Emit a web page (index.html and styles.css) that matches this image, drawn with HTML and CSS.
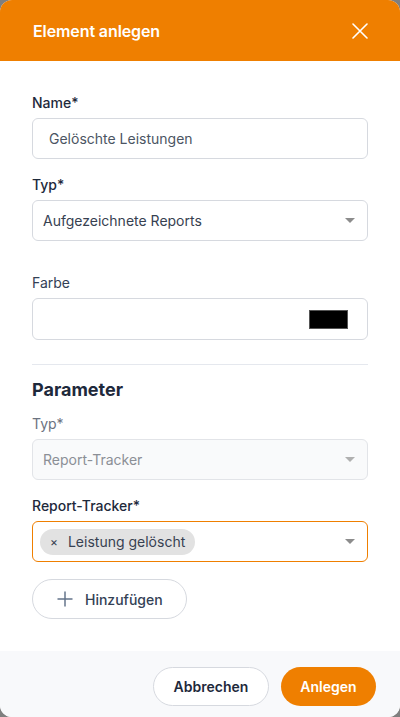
FILE: index.html
```html
<!DOCTYPE html>
<html lang="de">
<head>
<meta charset="utf-8">
<title>Element anlegen</title>
<link rel="stylesheet" href="styles.css">
</head>
<body>
<div class="modal">
  <header class="modal-header">
    <h1 class="modal-title">Element anlegen</h1>
    <button class="close-btn" aria-label="Schließen">
      <svg width="16" height="16" viewBox="0 0 16 16"><path d="M1 1L15 15M15 1L1 15" stroke="#fff" stroke-width="1.6" fill="none" stroke-linecap="round"/></svg>
    </button>
  </header>
  <main class="modal-body">
    <div class="field">
      <label class="label">Name*</label>
      <div class="input"><span class="input-text">Gelöschte Leistungen</span></div>
    </div>
    <div class="field">
      <label class="label">Typ*</label>
      <div class="input select"><span class="select-text">Aufgezeichnete Reports</span><span class="caret"></span></div>
    </div>
    <div class="field field-farbe">
      <label class="label label-light">Farbe</label>
      <div class="input color"><span class="swatch"></span></div>
    </div>
    <hr class="sep">
    <h2 class="section-title">Parameter</h2>
    <div class="field">
      <label class="label label-muted">Typ*</label>
      <div class="input select disabled"><span class="select-text">Report-Tracker</span><span class="caret"></span></div>
    </div>
    <div class="field">
      <label class="label">Report-Tracker*</label>
      <div class="input select focused"><span class="chip"><span class="chip-x">×</span>Leistung gelöscht</span><span class="caret"></span></div>
    </div>
    <button class="add-btn">
      <svg width="16" height="16" viewBox="0 0 16 16"><path d="M8 0.5V15.5M0.5 8H15.5" stroke="#64748b" stroke-width="1.5" fill="none"/></svg>
      <span>Hinzufügen</span>
    </button>
  </main>
  <footer class="modal-footer">
    <button class="btn btn-outline">Abbrechen</button>
    <button class="btn btn-primary">Anlegen</button>
  </footer>
</div>
</body>
</html>
```
FILE: styles.css
```css
* { box-sizing: border-box; }
html, body { margin: 0; padding: 0; }
body {
  background: #7f7f7f;
  font-family: Inter, "Noto Sans", "Liberation Sans", sans-serif;
  width: 400px;
  height: 717px;
  overflow: hidden;
}
.modal {
  width: 400px;
  height: 717px;
  background: #fff;
  border-radius: 12px;
  overflow: hidden;
  display: flex;
  flex-direction: column;
}
.modal-header {
  height: 61px;
  background: #ef7f00;
  display: flex;
  align-items: center;
  justify-content: space-between;
  padding: 0 32px 0 33px;
  flex-shrink: 0;
}
.modal-title {
  margin: 0;
  color: #fff;
  font-size: 16px;
  font-weight: 600;
  letter-spacing: -0.1px;
}
.close-btn {
  background: none;
  border: 0;
  padding: 0;
  width: 16px;
  height: 16px;
  display: flex;
  cursor: pointer;
}
.modal-body {
  flex: 1;
  padding: 32px 32px 0 32px;
  display: flex;
  flex-direction: column;
}
.field { display: flex; flex-direction: column; margin-bottom: 16px; }
.field-farbe { margin-top: 16px; margin-bottom: 24px; }
.label {
  font-size: 14px;
  line-height: 20px;
  font-weight: 500;
  color: #1e293b;
  margin-bottom: 5px;
}
.label-light { font-weight: 400; color: #334155; }
.label-muted { font-weight: 400; color: #6b7280; }
.input {
  height: 41px;
  border: 1px solid #d6d9df;
  border-radius: 6px;
  display: flex;
  align-items: center;
  padding: 0 16px;
  font-size: 14px;
  color: #4b5563;
  background: #fff;
}
.select { padding: 0 11px 0 10px; justify-content: space-between; }
.select-text { color: #374151; }
.caret {
  width: 0; height: 0;
  border-left: 5px solid transparent;
  border-right: 5px solid transparent;
  border-top: 5px solid #8c8c8c;
  margin-right: 1px;
}
.disabled { background: #f9fafb; border-color: #e2e4e8; }
.disabled .select-text { color: #8b8f96; }
.disabled .caret { border-top-color: #b0b0b0; }
.focused { border-color: #ef7f00; padding-left: 7px; }
.color { height: 42px; justify-content: flex-end; padding-right: 19px; }
.swatch {
  width: 39px; height: 19px;
  background: #000;
  border: 1px solid #555;
}
.chip {
  height: 26px;
  background: #e2e2e2;
  border-radius: 13px;
  display: flex;
  align-items: center;
  padding: 0 10px 0 10px;
  font-size: 14px;
  color: #374151;
}
.chip-x { font-size: 12px; margin-right: 10px; color: #374151; }
.sep {
  border: 0;
  border-top: 1px solid #e5e8ee;
  margin: 0 0 13px 0;
}
.section-title {
  margin: 0 0 12px 0;
  font-size: 18px;
  line-height: 24px;
  font-weight: 700;
  color: #1e293b;
}
.add-btn {
  align-self: flex-start;
  width: 155px;
  height: 40px;
  margin-top: 1px;
  border: 1px solid #d6d9df;
  border-radius: 20px;
  background: #fff;
  display: flex;
  align-items: center;
  gap: 12px;
  padding: 0 0 0 24px;
  font-family: inherit;
  font-size: 14px;
  font-weight: 500;
  color: #334155;
}
.modal-footer {
  height: 66px;
  background: #f8f9fb;
  display: flex;
  justify-content: flex-end;
  align-items: flex-start;
  gap: 12px;
  padding: 16px 24px 0 0;
  flex-shrink: 0;
}
.btn {
  height: 39px;
  border-radius: 20px;
  font-family: inherit;
  font-size: 14px;
  font-weight: 600;
  cursor: pointer;
}
.btn-outline {
  width: 116px;
  background: #fff;
  border: 1px solid #d6d9df;
  color: #1e293b;
}
.btn-primary {
  width: 95px;
  background: #ef7f00;
  border: 0;
  color: #fff;
}
```
